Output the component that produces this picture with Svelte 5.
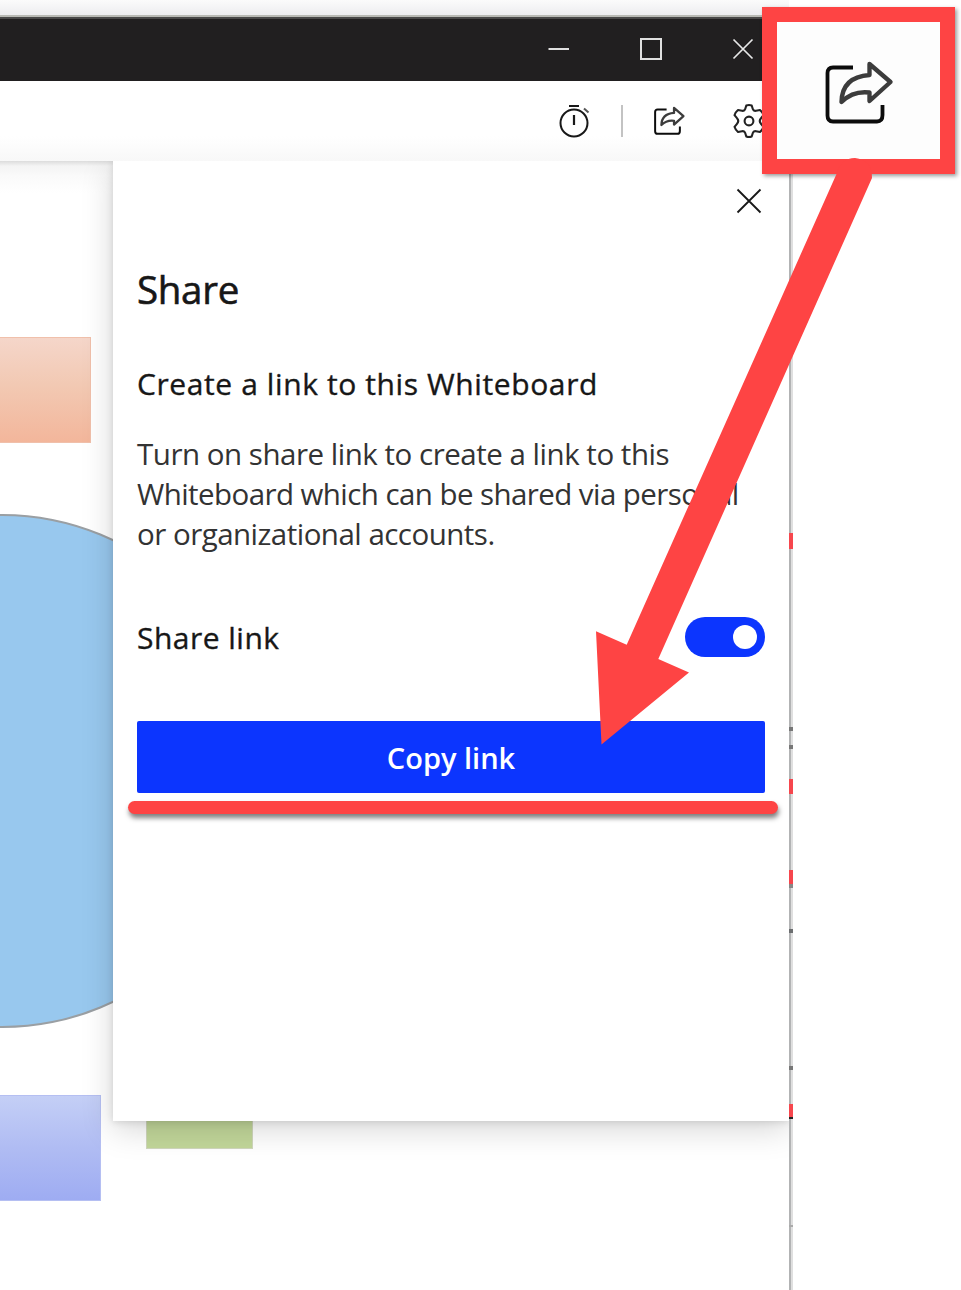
<script>
  let linkOn = $state(true);
  const ticks = [
    { y: 533, h: 16, c: '#f6464d' },
    { y: 727, h: 4, c: '#777' },
    { y: 745, h: 4, c: '#777' },
    { y: 779, h: 15, c: '#f6464d' },
    { y: 870, h: 14, c: '#f6464d' },
    { y: 884, h: 4, c: '#888' },
    { y: 929, h: 4, c: '#6c6e70' },
    { y: 1066, h: 4, c: '#777' },
    { y: 1104, h: 13, c: '#f6464d' },
    { y: 1117, h: 2, c: '#222' },
    { y: 1225, h: 2, c: '#aaa' }
  ];
</script>

{#snippet shareIcon(w, h, sw)}
  <svg class="icon" width={w} height={h} viewBox="0 0 70 66" fill="none" stroke="#0c0c0c" stroke-width={sw} stroke-linejoin="round">
    <path d="M28 7.500H8Q2.500 7.500 2.500 13V55.500Q2.500 61.500 8 61.500H52Q57.500 61.500 57.500 55V45" />
    <path d="M44.500 4L65.500 22L44.500 41V32.500Q28 30.500 16.500 42Q17 17 44.500 15Z" stroke="#3c3c3c" stroke-width={sw * 1.15} />
  </svg>
{/snippet}

<div class="page">
  <div class="window">
    <div class="titlebar">
      <svg width="22" height="22" viewBox="0 0 22 22" stroke="#e0e0e0" stroke-width="2"><path d="M0.500 11H21" /></svg>
      <svg width="22" height="22" viewBox="0 0 22 22" fill="none" stroke="#e0e0e0" stroke-width="2"><path d="M1 1H21V21H1Z" /></svg>
      <svg width="22" height="22" viewBox="0 0 22 22" stroke="#e8e8e8" stroke-width="1.700"><path d="M1.500 1.500L20.500 20.500M20.500 1.500L1.500 20.500" /></svg>
    </div>
    <div class="toolbar">
      <svg class="timer" width="32" height="34" viewBox="0 0 32 34" fill="none" stroke="#181818" stroke-width="2">
        <circle cx="15" cy="19" r="13.500" /><path d="M10 2H20M15 11V21" stroke-width="2.200" /><path d="M25 4.500L29.500 8.500" stroke="#555" />
      </svg>
      <span class="rule"></span>
      {@render shareIcon(31.5, 30, 4.4)}
      <svg class="gear" width="34" height="36" viewBox="0 0 34 36" fill="none" stroke="#222" stroke-width="2.100" stroke-linejoin="round">
        <circle cx="17" cy="18" r="4.400" />
        <path d="M14.300 2.500Q17 1.500 19.700 2.500L20.800 6Q21.500 8.300 24 7.800L28 7Q30.500 9 31.500 12.200L29 15.200Q26.500 18 29 20.800L31.500 23.800Q30.500 27 28 29L24 28.200Q21.500 27.700 20.800 30L19.700 33.500Q17 34.500 14.300 33.500L13.200 30Q12.500 27.700 10 28.200L6 29Q3.500 27 2.500 23.800L5 20.800Q7.500 18 5 15.200L2.500 12.200Q3.500 9 6 7L10 7.800Q12.500 8.300 13.200 6Z" />
      </svg>
    </div>
    <main class="board">
      <div class="shape peach"></div>
      <div class="shape circle"></div>
      <div class="shape violet"></div>
      <div class="shape green"></div>
      <section class="panel">
        <div class="close">
          <svg width="26" height="26" viewBox="0 0 26 26" stroke="#181818" stroke-width="1.800"><path d="M1.500 1.500L24.500 24.500M24.500 1.500L1.500 24.500" /></svg>
        </div>
        <h1>Share</h1>
        <h2>Create a link to this Whiteboard</h2>
        <p>
          <span class="l1">Turn on share link to create a link to this</span><br />
          <span class="l2">Whiteboard which can be shared via personal</span><br />
          <span class="l3">or organizational accounts.</span>
        </p>
        <div class="row">
          <span class="label">Share link</span>
          <button class="toggle" class:on={linkOn} aria-label="Share link" onclick={() => (linkOn = !linkOn)}><i></i></button>
        </div>
        <button class="copy"><span>Copy link</span></button>
      </section>
    </main>
  </div>
  <div class="edge"></div>
  {#each ticks as t}
    <span class="tick" style="top:{t.y}px;height:{t.h}px;background:{t.c}"></span>
  {/each}
  <div class="underline"></div>
  <div class="callout">{@render shareIcon(70, 66, 3.8)}</div>
  <svg class="arrow" width="961" height="1290" viewBox="0 0 961 1290" fill="#fe4444">
    <path d="M836.500 174Q841 158 855 158Q872 160 872 178L658.300 659L689 672.500L601.500 744.500L596 631.300L626.700 644.700Z" />
  </svg>
</div>

<style>
  :global(body) { margin: 0; background: #fff; }
  .page { position: relative; width: 961px; height: 1290px; overflow: hidden; background: #fff; font-family: 'Open Sans', 'Noto Sans', sans-serif; color: #171717; display: flex; }
  .window { width: 789px; display: flex; flex-direction: column; padding-top: 15px; background: linear-gradient(#fbfbfb, #ededf0 15px, #fff 16px); box-sizing: border-box; }
  .titlebar { box-sizing: border-box; height: 66px; background: #211f20; border-top: 2px solid #b9bab5; box-shadow: inset 0 2px #4a4949; display: flex; justify-content: flex-end; align-items: center; gap: 70px; padding: 0 35px 0 0; flex: none; }
  .toolbar { height: 80px; flex: none; background: linear-gradient(#fff 55px, #f8f8f8); display: flex; align-items: center; box-sizing: border-box; padding-left: 559px; position: relative; }
  .timer { margin-right: 30px; margin-top: -1px; }
  .rule { width: 2px; height: 32px; background: #c3c3c3; margin-right: 31px; }
  .gear { margin-left: 46px; margin-right: -20px; flex: none; }
  .icon { display: block; flex: none; }
  .board { position: relative; flex: 1; overflow: hidden; background: linear-gradient(#dcdcdc, #f4f4f4 5px, #fafafa 15px, #fff 32px); padding-left: 113px; }
  .shape { position: absolute; box-sizing: border-box; }
  .peach { left: -20px; top: 176px; width: 111px; height: 106px; background: linear-gradient(#f5d6ca, #f2c9b3 45%, #f3b69b); border: 1px solid #f0c0ab; }
  .circle { left: -254px; top: 353px; width: 513px; height: 514px; border-radius: 50%; background: #98c8ee; border: 2px solid #9a9fa3; }
  .violet { left: -20px; top: 934px; width: 121px; height: 106px; background: linear-gradient(#c4cff6, #b0bcf3 50%, #9eacf2); border: 1px solid #b5bff2; }
  .green { left: 146px; top: 930px; width: 107px; height: 58px; background: #c2d79a; border: 1px solid #d0d7bd; }
  .panel { position: relative; box-sizing: border-box; width: 676px; height: 960px; background: #fff; padding: 27px 24px; box-shadow: 0 8px 30px rgba(0, 0, 0, 0.17), 0 1px 7px rgba(0, 0, 0, 0.12); display: flex; flex-direction: column; }
  .close { display: flex; justify-content: flex-end; height: 26px; padding-right: 3px; flex: none; }
  h1, h2, p { margin: 0; white-space: nowrap; }
  h1 { margin-top: 48px; font-size: 38.5px; line-height: 54px; font-weight: 400; letter-spacing: -0.3px; -webkit-text-stroke: 0.6px #171717; }
  h2 { margin-top: 48px; font-size: 30px; line-height: 40px; font-weight: 400; letter-spacing: 0.6px; -webkit-text-stroke: 0.35px #171717; }
  p { margin-top: 30px; font-size: 29.5px; line-height: 40px; color: #333; }
  .l1 { letter-spacing: -0.48px; }
  .l2 { letter-spacing: -0.57px; }
  .l3 { letter-spacing: -0.52px; }
  .row { display: flex; justify-content: space-between; align-items: center; height: 40px; margin-top: 63px; flex: none; }
  .label { font-size: 30px; letter-spacing: 0.48px; -webkit-text-stroke: 0.35px #171717; }
  button { border: 0; padding: 0; font: inherit; }
  .toggle { width: 80px; height: 40px; border-radius: 20px; background: #888; padding: 0 8px; display: flex; align-items: center; }
  .toggle.on { justify-content: flex-end; background: #0c35fe; }
  .toggle i { width: 24px; height: 24px; border-radius: 50%; background: #fff; }
  .copy { height: 72px; margin-top: 64px; flex: none; border-radius: 2px; background: #0c35fe; color: #fff; font-size: 29px; font-weight: 600; }
  .edge { width: 4px; box-sizing: border-box; background: #dfdfdf; border-left: 2px solid #b2b3b4; margin-top: 17px; }
  .tick { position: absolute; left: 789px; width: 4px; }
  .underline { position: absolute; left: 128px; top: 801px; width: 650px; height: 13px; border-radius: 7px; background: #fe4444; box-shadow: 1px 4px 5px rgba(0, 0, 0, 0.5); }
  .callout { position: absolute; left: 762px; top: 7px; width: 193px; height: 167px; box-sizing: border-box; border: 15px solid #fe4444; background: #fdfdfd; box-shadow: 2px 2px 4px rgba(0, 0, 0, 0.4); padding: 38px 0 0 48px; }
  .arrow { position: absolute; left: 0; top: 0; pointer-events: none; }
</style>
